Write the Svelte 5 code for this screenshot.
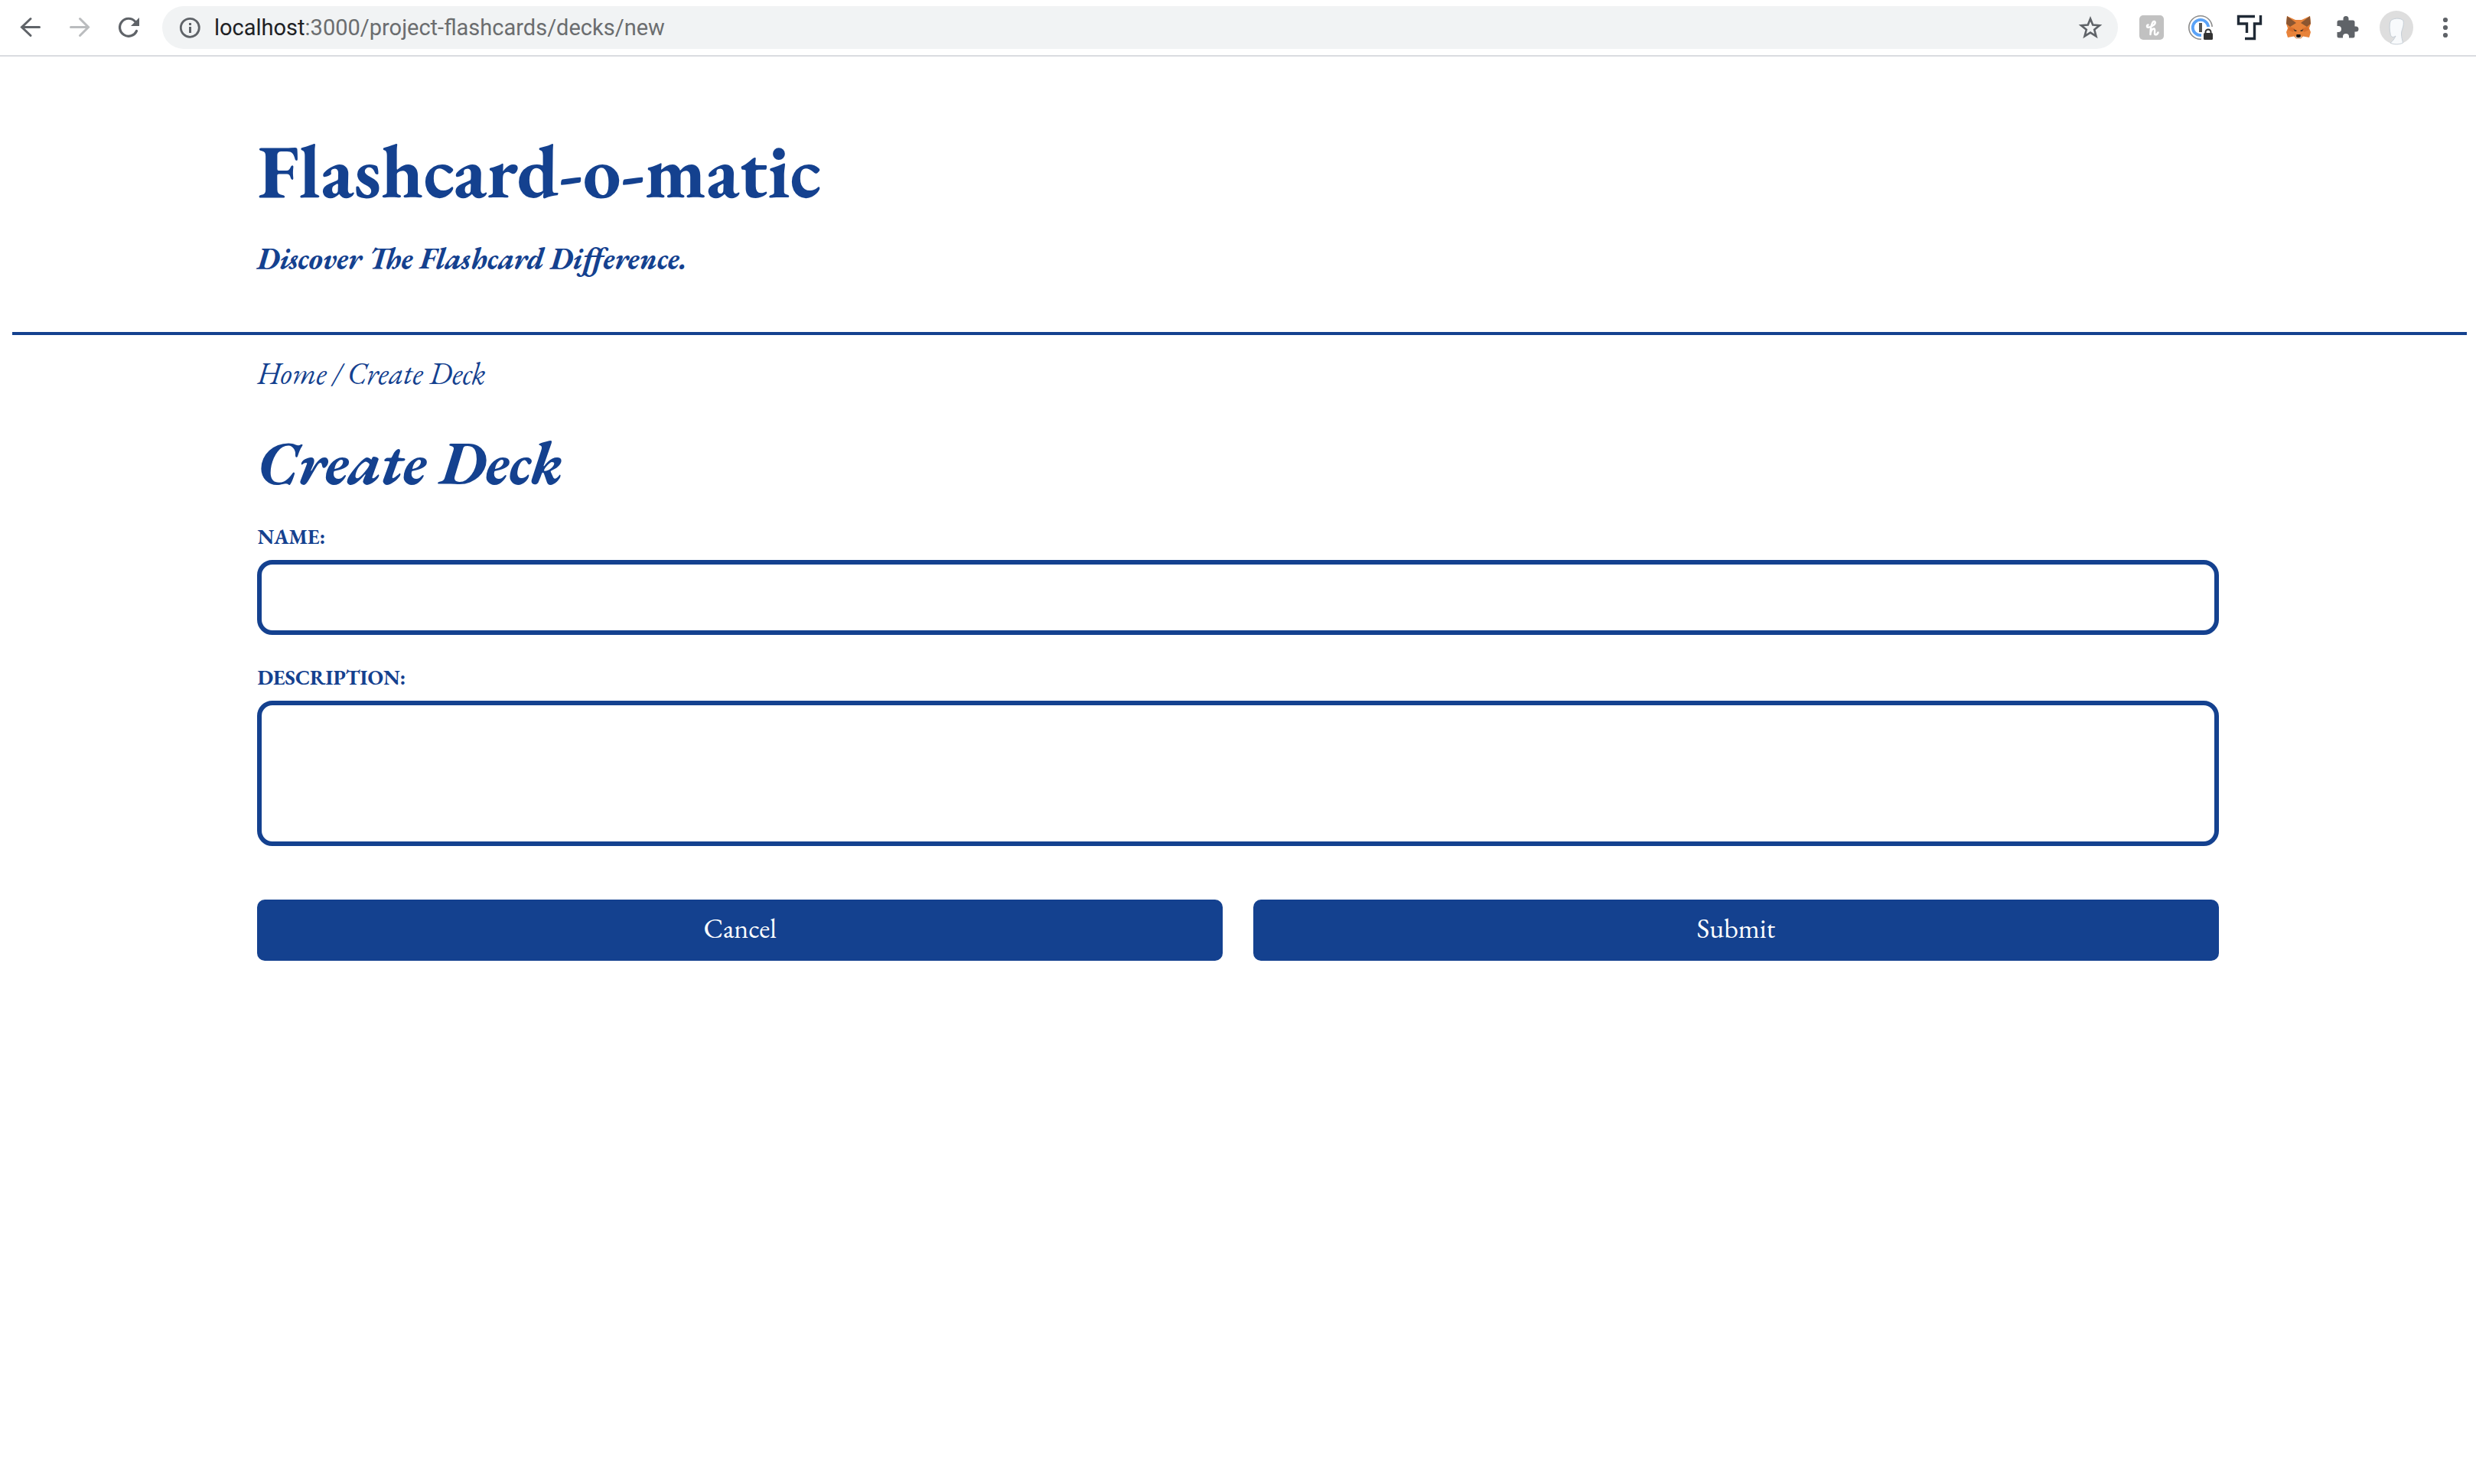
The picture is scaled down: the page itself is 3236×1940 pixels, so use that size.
<script>
  let name = $state('');
  let description = $state('');
</script>

<div class="toolbar">
  <div class="group">
    <button type="button" class="tool" aria-label="Back">
      <svg viewBox="0 0 64 64"><path d="M43.5 31.5H21M32 20.500L20.500 31.500L32 42.500" fill="none" stroke="#5f6368" stroke-width="3" stroke-linecap="round" stroke-linejoin="miter" /></svg>
    </button>
    <button type="button" class="tool" aria-label="Forward">
      <svg viewBox="0 0 64 64"><path d="M20.500 31.500H43M32.500 20.500L43.500 31.500L32.500 42.500" fill="none" stroke="#babcbe" stroke-width="3" stroke-linecap="round" /></svg>
    </button>
    <button type="button" class="tool" aria-label="Reload">
      <svg viewBox="0 0 64 64"><path d="M42.500 36.500A11.500 11.500 0 1 1 40.500 24" fill="none" stroke="#5f6368" stroke-width="3.200" stroke-linecap="round" /><path d="M46 19V30H35Z" fill="#5f6368" /></svg>
    </button>
  </div>

  <div class="address">
    <svg class="mark" viewBox="0 0 40 40" aria-hidden="true"><circle cx="20.300" cy="20.300" r="12" fill="none" stroke="#5f6368" stroke-width="2.800" /><path d="M19 14h3v3h-3zM19 19h3v8h-3z" fill="#5f6368" /></svg>
    <a class="url" href="/project-flashcards/decks/new"><span class="host">localhost</span>:3000/project-flashcards/decks/new</a>
    <button type="button" class="star" aria-label="Bookmark this page">
      <svg class="mark" viewBox="0 0 40 40"><path d="M20 8.500L23.200 16.600L32 17.200L25.200 22.800L27.500 31.300L20 26.600L12.500 31.300L14.800 22.800L8 17.200L16.800 16.600Z" fill="none" stroke="#5f6368" stroke-width="2.600" /></svg>
    </button>
  </div>

  <div class="group">
    <button type="button" class="tool" aria-label="Honey">
      <svg viewBox="0 0 64 64"><rect x="16" y="16" width="32" height="32" rx="5" fill="#c1c1c1" /><path d="M30.500 41C30.500 36 31 28 34 24.500C36.500 22.500 38 26 35 28.500C32 31 29 32 26.500 31.500C25.500 30.500 26 28.500 27.500 28.500M30.500 40C31 36 33.500 33 35.300 33.500C37.500 34.500 34.500 41 37 41.300C39 41.300 40 40 40.500 38.500" fill="none" stroke="#fff" stroke-width="2.500" stroke-linecap="round" stroke-linejoin="round" /></svg>
    </button>
    <button type="button" class="tool" aria-label="1Password">
      <svg viewBox="0 0 64 64"><circle cx="32" cy="32" r="15.200" fill="#fff" stroke="#8b8b8b" stroke-width="1.600" /><circle cx="32" cy="32" r="10.200" fill="#fff" stroke="#5aa2f7" stroke-width="3.800" /><path d="M33 36L38 31H50V50H33Z" fill="#fff" /><rect x="30" y="26" width="4" height="12" fill="#555" /><path d="M38.500 39V38a3.500 3.500 0 0 1 7 0v1" fill="none" stroke="#333" stroke-width="2" /><rect x="36" y="39" width="12" height="9" rx="1.500" fill="#333" /></svg>
    </button>
    <button type="button" class="tool" aria-label="Toggle Track">
      <svg viewBox="0 0 64 64"><path d="M39 17.500H17.500V27H28.500V39M26 46.500H38.500V27H46.500V16" fill="none" stroke="#202a36" stroke-width="3.400" /></svg>
    </button>
    <button type="button" class="tool" aria-label="MetaMask">
      <svg viewBox="0 0 64 64"><path d="M17 17L28 22H36L47 17L48 27L46 33L48 38L46 45L38 43.500L35 46.500H29L26 43.500L18 45L16 38L18 33L16 27Z" fill="#e8833a" /><path d="M17 17L29 26L21 31L16 27ZM47 17L35 26L43 31L48 27Z" fill="#8b5631" /><path d="M20 31L27 33L25 38L18 35ZM44 31L37 33L39 38L46 35Z" fill="#d9702d" /><path d="M28 43L29 46.500H35L36 43Z" fill="#d8c8bc" /><path d="M29.500 41H34.500L35 44L33 45H31L29 44Z" fill="#161616" /><path d="M25.500 34L30 36L29 37H27ZM38.500 34L34 36L35 37H37Z" fill="#4b3424" /></svg>
    </button>
    <button type="button" class="tool" aria-label="Extensions">
      <svg viewBox="0 0 64 64"><path d="M21 22.500H26.500V20.500a3.500 3.500 0 0 1 7 0V22.500H39a2.500 2.500 0 0 1 2.500 2.500V30.500H43a3.500 3.500 0 0 1 0 7H41.500V43a2.500 2.500 0 0 1 -2.500 2.500H34V44a4 4 0 0 0 -8 0V45.500H21a2.500 2.500 0 0 1 -2.500 -2.500V38H20a4 4 0 0 0 0 -8H18.500V25a2.500 2.500 0 0 1 2.500 -2.500Z" fill="#5f6368" /></svg>
    </button>
    <button type="button" class="tool" aria-label="Profile">
      <svg viewBox="0 0 64 64"><circle cx="32" cy="32" r="22" fill="#dedede" /><path d="M24 24C27 19 38 19 41 23C42.500 30 38.500 35 38.500 40C38.500 45 40 49 40.500 52C36 54.500 28 54.500 24 52C27 50 29 47 31 43C27 46 24.500 44 24 40C23 35 22.500 29 24 24Z" fill="#f8fafc" stroke="#c5ced6" stroke-width="1" /></svg>
    </button>
    <button type="button" class="tool" aria-label="Menu">
      <svg viewBox="0 0 64 64" fill="#5f6368"><circle cx="32" cy="22" r="3.100" /><circle cx="32" cy="32" r="3.100" /><circle cx="32" cy="42" r="3.100" /></svg>
    </button>
  </div>
</div>

<div class="page">
  <header>
    <div class="inner">
      <h1>Flashcard-o-matic</h1>
      <p class="tagline">Discover The Flashcard Difference.</p>
    </div>
  </header>

  <main class="inner">
    <nav aria-label="Breadcrumb"><a href="/project-flashcards">Home</a> / Create Deck</nav>
    <h2>Create Deck</h2>
    <form onsubmit={(e) => e.preventDefault()}>
      <div class="field">
        <label for="name">NAME:</label>
        <input id="name" type="text" bind:value={name} />
      </div>
      <div class="field">
        <label for="description">DESCRIPTION:</label>
        <textarea id="description" bind:value={description}></textarea>
      </div>
      <div class="actions">
        <button type="button" class="action">Cancel</button>
        <button type="submit" class="action">Submit</button>
      </div>
    </form>
  </main>
</div>

<style>
  :global(body) {
    margin: 0;
    background: #fff;
  }
  .toolbar {
    display: flex;
    align-items: center;
    gap: 12px;
    height: 72px;
    padding: 0 8px;
    border-bottom: 2px solid #dadce0;
    font-family: Roboto, 'Liberation Sans', sans-serif;
  }
  .group {
    display: flex;
    flex: none;
  }
  .tool,
  .star {
    display: flex;
    padding: 0;
    border: 0;
    background: none;
  }
  .tool svg {
    width: 64px;
    height: 64px;
  }
  .mark {
    flex: none;
    width: 40px;
    height: 40px;
  }
  .address {
    display: flex;
    flex: 1;
    align-items: center;
    gap: 12px;
    height: 56px;
    padding: 0 16px;
    border-radius: 28px;
    background: #f1f3f4;
  }
  .url {
    flex: 1;
    color: #6b6d6f;
    font-size: 29px;
    line-height: 36px;
    text-decoration: none;
  }
  .host {
    color: #202124;
  }
  .page {
    padding: 0 16px;
    color: #14418f;
    font-family: 'EB Garamond', 'Liberation Serif', serif;
  }
  header {
    margin-right: -4px;
    padding: 99px 0 72px;
    border-bottom: 4px solid #14418f;
  }
  .inner {
    width: 80%;
    margin: 0 auto;
  }
  h1 {
    margin: 0;
    font-size: 99px;
    line-height: 100px;
  }
  .tagline {
    margin: 41px 0 0;
    font-size: 39px;
    font-style: italic;
    font-weight: 700;
    font-variant-ligatures: common-ligatures discretionary-ligatures;
    line-height: 48px;
  }
  nav {
    padding-top: 26px;
    font-size: 40px;
    font-style: italic;
    line-height: 48px;
  }
  nav a {
    color: inherit;
    text-decoration: none;
  }
  h2 {
    margin: 45px 0 33px;
    font-size: 80px;
    font-style: italic;
    line-height: 96px;
  }
  form {
    display: flex;
    flex-direction: column;
    gap: 40px;
  }
  .field {
    display: flex;
    flex-direction: column;
    gap: 14px;
  }
  label {
    font-size: 27px;
    font-weight: 700;
    line-height: 32px;
  }
  input,
  textarea {
    box-sizing: border-box;
    width: 100%;
    height: 98px;
    margin: 0;
    padding: 20px;
    border: 6px solid #14418f;
    border-radius: 20px;
    outline: 0;
    background: #fff;
    color: inherit;
    font: inherit;
    font-size: 36px;
    resize: none;
  }
  textarea {
    height: 190px;
  }
  .actions {
    display: grid;
    grid-template-columns: 1fr 1fr;
    gap: 40px;
    padding-top: 30px;
  }
  .action {
    height: 80px;
    padding: 0 20px 5px;
    border: 0;
    border-radius: 10px;
    background: #14418f;
    color: #fff;
    font-family: inherit;
    font-size: 36px;
  }
</style>
